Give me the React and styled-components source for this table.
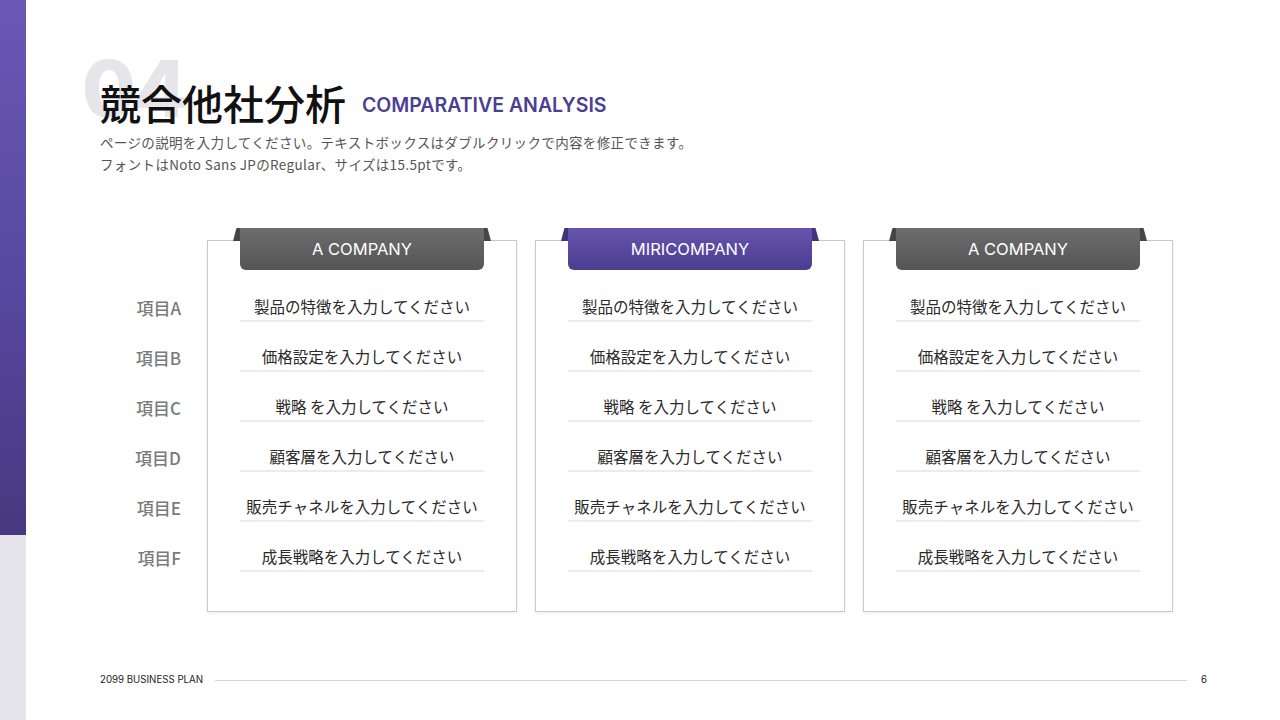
import { createGlobalStyle, styled } from 'styled-components'

const GlobalStyle = createGlobalStyle`
  html, body {
    margin: 0;
    padding: 0;
    background: #fff;
  }
  body {
    font-family: 'Noto Sans CJK JP', 'Noto Sans', sans-serif;
  }
`

const Page = styled.div`
  display: flex;
  width: 1280px;
  height: 720px;
  overflow: hidden;
  background: #fff;
`

const Sidebar = styled.div`
  width: 26px;
  display: flex;
  flex-direction: column;
  flex-shrink: 0;
`

const SidebarTop = styled.div`
  height: 535px;
  background: linear-gradient(180deg, #6959b4 0%, #5647a0 55%, #47397f 100%);
`

const SidebarBottom = styled.div`
  flex: 1;
  background: #e5e4ea;
`

const Main = styled.div`
  flex: 1;
  display: flex;
  flex-direction: column;
  padding: 78px 73px 33px 74px;
`

const TitleRow = styled.div`
  position: relative;
  display: flex;
  align-items: center;
  gap: 16px;
`

const Number = styled.span`
  position: absolute;
  left: -18px;
  top: -28px;
  font-family: Inter, sans-serif;
  font-weight: 800;
  font-size: 78px;
  line-height: 1;
  color: #e5e5ea;
  letter-spacing: -2px;
`

const Title = styled.h1`
  position: relative;
  margin: 0;
  font-family: 'Noto Sans CJK JP', sans-serif;
  font-weight: 500;
  font-size: 41px;
  line-height: 49px;
  color: #111;
`

const SubTitle = styled.span`
  position: relative;
  margin-top: 5px;
  font-family: Inter, sans-serif;
  font-weight: 600;
  font-size: 19.5px;
  line-height: 24px;
  color: #4b3f94;
`

const Description = styled.p`
  margin: 4px 0 0;
  font-size: 13.5px;
  letter-spacing: 0.35px;
  line-height: 22px;
  color: #555;
`

const Board = styled.div`
  display: flex;
  align-items: flex-start;
  margin-top: 52px;
`

const Labels = styled.div`
  width: 107px;
  padding-top: 44px;
  padding-right: 26px;
  box-sizing: border-box;
  display: flex;
  flex-direction: column;
`

const Label = styled.div`
  height: 50px;
  display: flex;
  align-items: flex-end;
  justify-content: flex-end;
  padding-bottom: 1px;
  box-sizing: border-box;
  font-size: 17px;
  line-height: 24px;
  font-weight: 500;
  color: #7a7a7a;
`

const Cards = styled.div`
  display: flex;
  gap: 18px;
`

const Card = styled.div`
  width: 310px;
  box-sizing: border-box;
  margin-top: 13px;
  padding: 0 32px 39px;
  border: 1px solid #c9c9c9;
  background: #fff;
  box-shadow: 0 1px 3px rgba(0, 0, 0, 0.08);
  display: flex;
  flex-direction: column;
`

const Tab = styled.div`
  position: relative;
  margin-top: -13px;
  height: 42px;
  display: flex;
  align-items: center;
  justify-content: center;
  border-radius: 0 0 6px 6px;
  background: ${({ $accent }) =>
    $accent
      ? 'linear-gradient(180deg, #6555ad 0%, #4b3d90 100%)'
      : 'linear-gradient(180deg, #6d6d6d 0%, #555 100%)'};
  color: #fff;
  font-family: Inter, sans-serif;
  font-size: 16.5px;
  font-weight: 400;
  margin-bottom: 2px;

  &::before,
  &::after {
    content: '';
    position: absolute;
    top: 0;
    width: 7px;
    height: 13px;
    background: ${({ $accent }) => ($accent ? '#3f3381' : '#454545')};
  }
  &::before {
    left: -7px;
    clip-path: polygon(100% 0, 50% 0, 0 100%, 100% 100%);
  }
  &::after {
    right: -7px;
    clip-path: polygon(0 0, 50% 0, 100% 100%, 0 100%);
  }
`

const Row = styled.div`
  height: 50px;
  display: flex;
  align-items: flex-end;
  justify-content: center;
  padding-bottom: 2px;
  box-sizing: border-box;
  border-bottom: 2px solid #ececec;
  font-size: 15.5px;
  font-weight: 400;
  line-height: 24px;
  color: #2a2a2a;
`

const Footer = styled.div`
  margin-top: auto;
  display: flex;
  align-items: center;
  gap: 12px;
  font-family: Inter, sans-serif;
  font-size: 9.7px;
  line-height: 14px;
  color: #222;
`

const FooterLine = styled.div`
  flex: 1;
  height: 1px;
  background: #d6d6d6;
  margin-right: 2px;
`

const labels = ['項目A', '項目B', '項目C', '項目D', '項目E', '項目F']
const items = [
  '製品の特徴を入力してください',
  '価格設定を入力してください',
  '戦略 を入力してください',
  '顧客層を入力してください',
  '販売チャネルを入力してください',
  '成長戦略を入力してください',
]
const companies = [
  { name: 'A COMPANY' },
  { name: 'MIRICOMPANY', accent: true },
  { name: 'A COMPANY' },
]

export default function App() {
  return (
    <Page>
      <GlobalStyle />
      <Sidebar>
        <SidebarTop />
        <SidebarBottom />
      </Sidebar>
      <Main>
        <TitleRow>
          <Number>04</Number>
          <Title>競合他社分析</Title>
          <SubTitle>COMPARATIVE ANALYSIS</SubTitle>
        </TitleRow>
        <Description>
          ページの説明を入力してください。テキストボックスはダブルクリックで内容を修正できます。
          <br />
          フォントはNoto Sans JPのRegular、サイズは15.5ptです。
        </Description>
        <Board>
          <Labels>
            {labels.map((l) => (
              <Label key={l}>{l}</Label>
            ))}
          </Labels>
          <Cards>
            {companies.map((c, i) => (
              <Card key={i}>
                <Tab $accent={c.accent}>{c.name}</Tab>
                {items.map((t) => (
                  <Row key={t}>{t}</Row>
                ))}
              </Card>
            ))}
          </Cards>
        </Board>
        <Footer>
          <span>2099 BUSINESS PLAN</span>
          <FooterLine />
          <span>6</span>
        </Footer>
      </Main>
    </Page>
  )
}
